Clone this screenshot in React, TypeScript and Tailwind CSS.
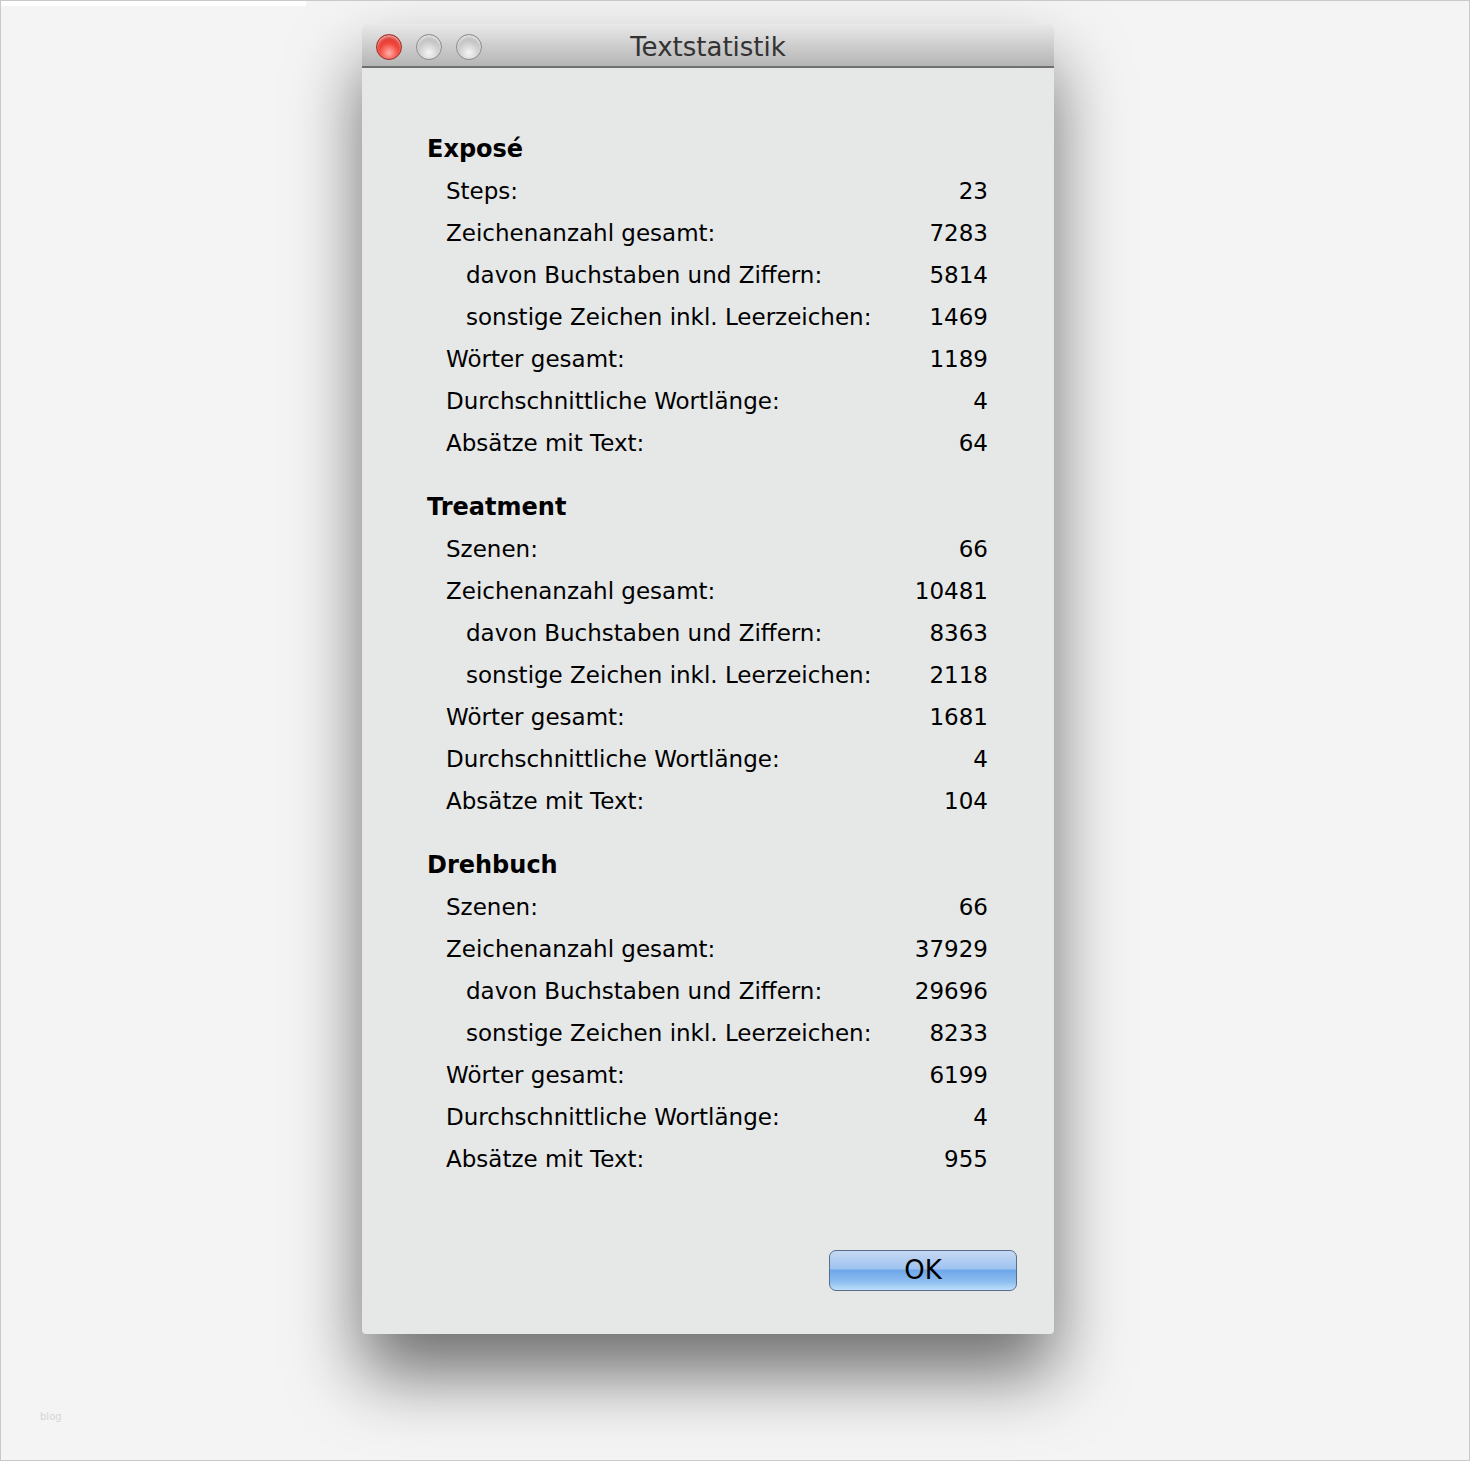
import React from "react";

type Row = { label: string; value: string; indent?: boolean };
type Section = { title: string; rows: Row[] };

const sections: Section[] = [
  {
    title: "Exposé",
    rows: [
      { label: "Steps:", value: "23" },
      { label: "Zeichenanzahl gesamt:", value: "7283" },
      { label: "davon Buchstaben und Ziffern:", value: "5814", indent: true },
      { label: "sonstige Zeichen inkl. Leerzeichen:", value: "1469", indent: true },
      { label: "Wörter gesamt:", value: "1189" },
      { label: "Durchschnittliche Wortlänge:", value: "4" },
      { label: "Absätze mit Text:", value: "64" },
    ],
  },
  {
    title: "Treatment",
    rows: [
      { label: "Szenen:", value: "66" },
      { label: "Zeichenanzahl gesamt:", value: "10481" },
      { label: "davon Buchstaben und Ziffern:", value: "8363", indent: true },
      { label: "sonstige Zeichen inkl. Leerzeichen:", value: "2118", indent: true },
      { label: "Wörter gesamt:", value: "1681" },
      { label: "Durchschnittliche Wortlänge:", value: "4" },
      { label: "Absätze mit Text:", value: "104" },
    ],
  },
  {
    title: "Drehbuch",
    rows: [
      { label: "Szenen:", value: "66" },
      { label: "Zeichenanzahl gesamt:", value: "37929" },
      { label: "davon Buchstaben und Ziffern:", value: "29696", indent: true },
      { label: "sonstige Zeichen inkl. Leerzeichen:", value: "8233", indent: true },
      { label: "Wörter gesamt:", value: "6199" },
      { label: "Durchschnittliche Wortlänge:", value: "4" },
      { label: "Absätze mit Text:", value: "955" },
    ],
  },
];

function Light({ red }: { red?: boolean }) {
  return (
    <div
      className={
        red
          ? "h-[26px] w-[26px] rounded-full border border-[#9e2b25] bg-[radial-gradient(circle_at_50%_75%,#ffb0a8_0%,#f2463c_45%,#c42a22_100%)] shadow-[inset_0_2px_3px_rgba(255,255,255,0.6)]"
          : "h-[26px] w-[26px] rounded-full border border-[#8c8c8c] bg-[radial-gradient(circle_at_50%_75%,#f6f6f6_0%,#cbcbcb_50%,#a8a8a8_100%)] shadow-[inset_0_2px_3px_rgba(255,255,255,0.7)]"
      }
    />
  );
}

export default function App() {
  return (
    <div
      className="relative h-[1461px] w-full overflow-hidden border border-[#c9c9c9] bg-[#f4f4f4]"
      style={{ fontFamily: '"DejaVu Sans", "Liberation Sans", sans-serif' }}
    >
      <div className="h-[5px] w-[305px] bg-white" />
      <div className="flex pl-[361px] pt-[18px]">
        <div className="flex w-[692px] flex-col rounded-t-[6px] rounded-b-[4px] bg-[#e6e7e7] shadow-[0_40px_70px_rgba(0,0,0,0.55)]">
          <div className="relative flex h-[44px] items-center rounded-t-[6px] border-b-2 border-[#6f6f6f] bg-[linear-gradient(#e9e9e9,#c9c9c9_60%,#b5b5b5)] px-[14px] pt-[3px]">
            <div className="flex gap-[14px]">
              <Light red />
              <Light />
              <Light />
            </div>
            <div className="absolute inset-0 flex items-center justify-center pt-[4px] text-[26px] text-[#333]">
              Textstatistik
            </div>
          </div>
          <div className="flex flex-col pl-[65px] pr-[66px] pt-[60px] text-black">
            {sections.map((s, i) => (
              <div key={s.title} className={i > 0 ? "mt-[22px]" : ""}>
                <div className="h-[42px] text-[24px] font-bold leading-[42px]">{s.title}</div>
                {s.rows.map((r) => (
                  <div key={r.label} className="flex h-[42px] items-center justify-between text-[23px] leading-[42px]">
                    <span className={r.indent ? "pl-[39px]" : "pl-[19px]"}>{r.label}</span>
                    <span>{r.value}</span>
                  </div>
                ))}
              </div>
            ))}
          </div>
          <div className="flex justify-end pb-[43px] pr-[37px] pt-[70px]">
            <button className="flex h-[41px] w-[188px] items-center justify-center rounded-[7px] border border-[#5a6c8c] bg-[linear-gradient(#c6d9f3,#9fc3f0_45%,#6ea7ea_50%,#8fbff0_80%,#bde0fa)] text-[26px] text-black">
              OK
            </button>
          </div>
        </div>
      </div>
      <div className="absolute left-[39px] top-[1408px] text-[10px] text-[#d4d4d4]">blog</div>
    </div>
  );
}
